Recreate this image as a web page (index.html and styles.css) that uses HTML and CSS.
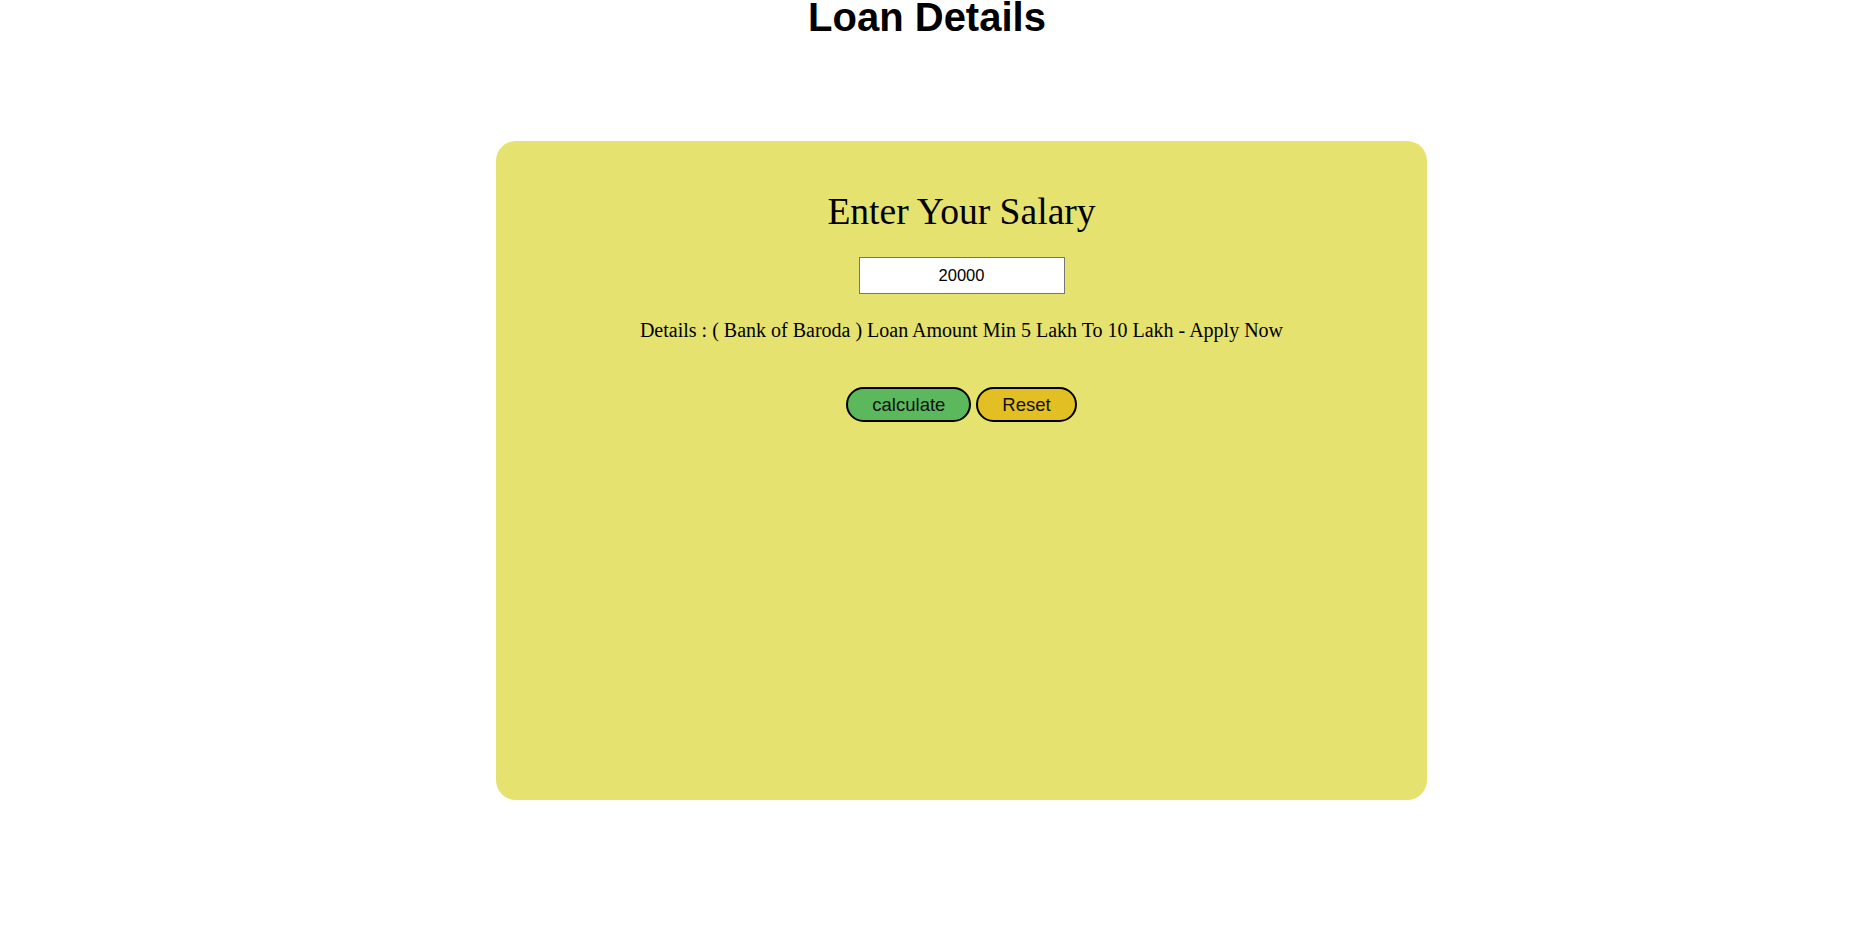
FILE: index.html
```html
<!DOCTYPE html>
<html>
<head>
<meta charset="utf-8">
<title>Loan Details</title>
<link rel="stylesheet" href="styles.css">
</head>
<body>
<h1 class="page-title">Loan Details</h1>
<div class="card">
  <h2 class="card-title">Enter Your Salary</h2>
  <input class="salary" type="text" value="20000">
  <p class="details">Details : ( Bank of Baroda ) Loan Amount Min 5 Lakh To 10 Lakh - Apply Now</p>
  <div class="actions">
    <button class="btn btn-calc">calculate</button>
    <button class="btn btn-reset">Reset</button>
  </div>
</div>
</body>
</html>
```
FILE: styles.css
```css
html, body {
  margin: 0;
  padding: 0;
  background: #ffffff;
}
body {
  font-family: "Liberation Serif", "Times New Roman", serif;
  color: #000;
}
.page-title {
  margin: 0;
  padding-left: 5px;
  font-family: "Liberation Sans", Arial, sans-serif;
  font-weight: bold;
  font-size: 40px;
  line-height: 35px;
  text-align: center;
}
.card {
  box-sizing: border-box;
  width: 931px;
  height: 659px;
  margin: 106px 0 0 496px;
  padding-top: 51px;
  background: #e5e26f;
  border-radius: 20px;
  display: flex;
  flex-direction: column;
  align-items: center;
}
.card-title {
  margin: 0;
  font-weight: normal;
  font-size: 37.6px;
  line-height: 40px;
}
.salary {
  box-sizing: border-box;
  width: 206px;
  height: 37px;
  margin-top: 25px;
  padding: 0 8px;
  border: 1px solid #767676;
  background: #fff;
  font-family: "Liberation Sans", Arial, sans-serif;
  font-size: 16.5px;
  text-align: center;
  color: #000;
}
.details {
  margin: 25px 0 0;
  font-size: 20px;
  line-height: 22px;
}
.actions {
  display: flex;
  gap: 5px;
  margin-top: 46px;
}
.btn {
  box-sizing: border-box;
  height: 35px;
  padding: 5px 24px;
  border: 2px solid #000;
  border-radius: 18px;
  font-family: "Liberation Sans", Arial, sans-serif;
  font-size: 18.5px;
  line-height: 21px;
  color: #111;
}
.btn-calc {
  background: #5cb85c;
}
.btn-reset {
  background: #e2bf22;
}
```
